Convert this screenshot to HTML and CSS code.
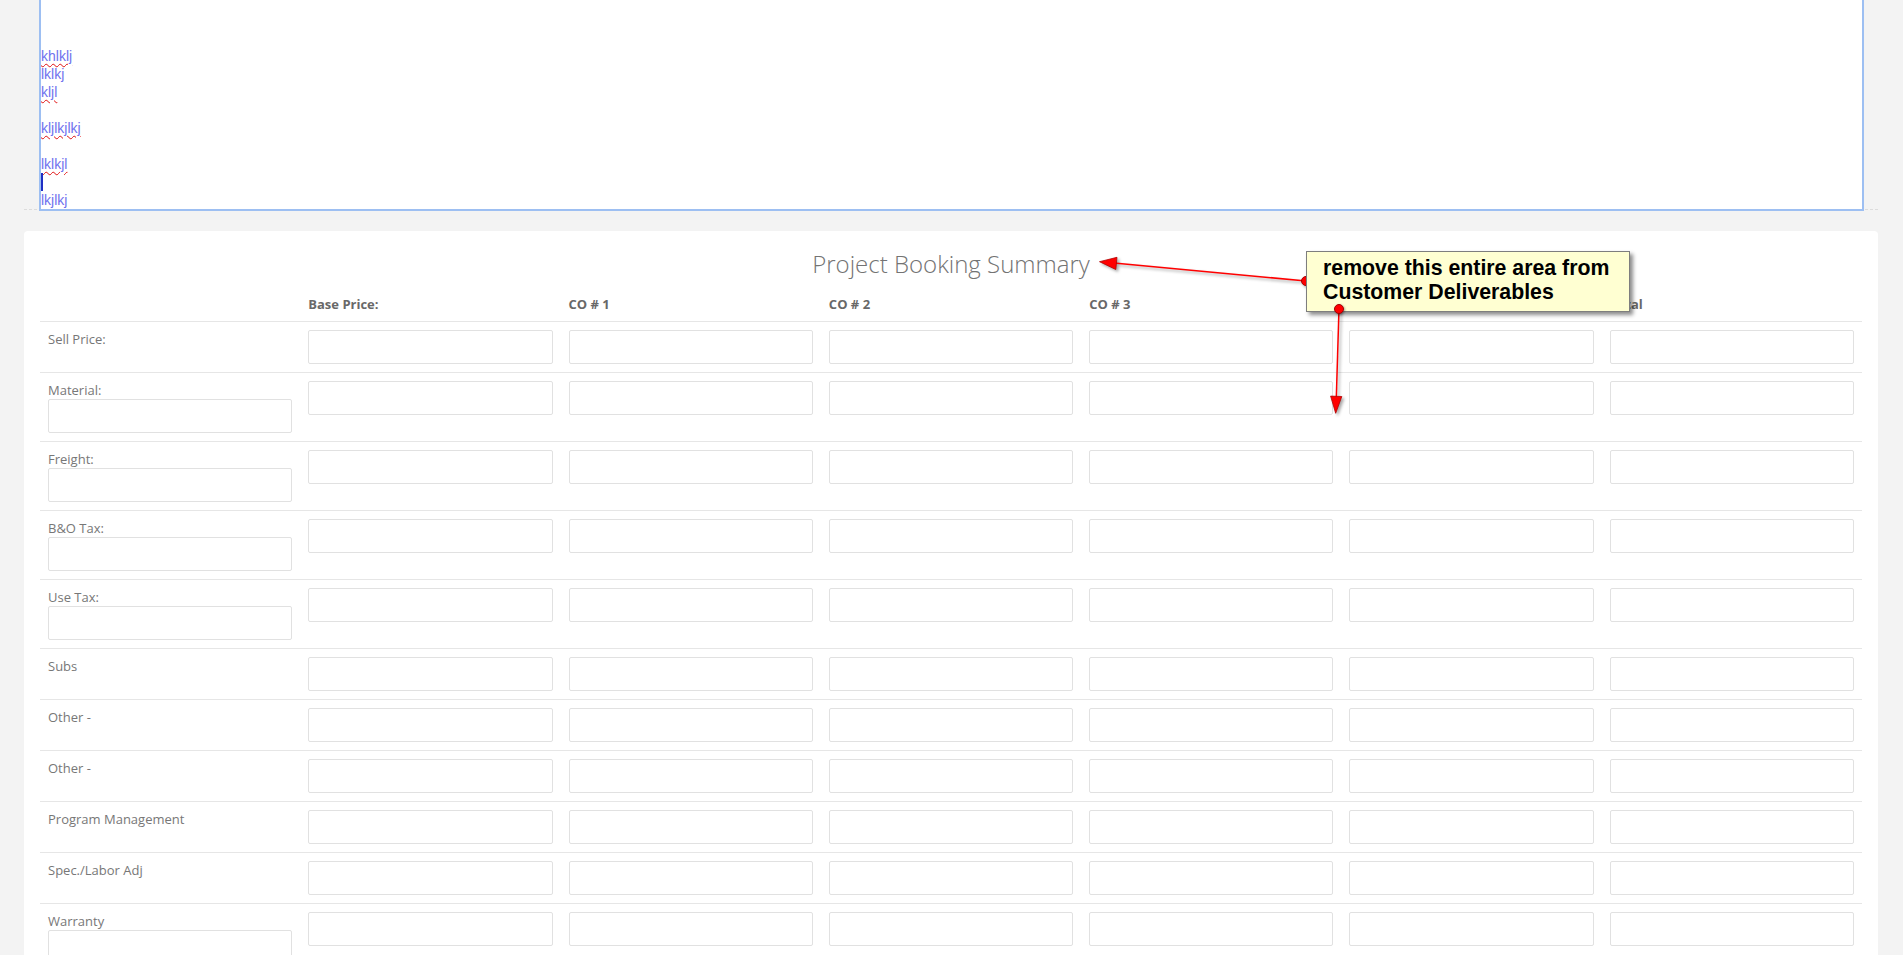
FILE: index.html
```html
<!DOCTYPE html>
<html lang="en">
<head>
<meta charset="utf-8">
<title>Project Booking Summary</title>
<link rel="stylesheet" href="styles.css">
</head>
<body>
<div class="editor-wrap">
  <div class="editor">
    <div class="line"><span class="sp">khlklj</span></div>
    <div class="line">lklkj</div>
    <div class="line"><span class="sp">kljl</span></div>
    <div class="line">&nbsp;</div>
    <div class="line"><span class="sp">kljlkjlkj</span></div>
    <div class="line">&nbsp;</div>
    <div class="line"><span class="sp">lklkjl</span></div>
    <div class="line"><span class="caret"></span></div>
    <div class="line">lkjlkj</div>
  </div>
</div>

<div class="card">
  <h3 class="card-title">Project Booking Summary</h3>
  <table class="summary">
    <thead>
      <tr>
        <th></th>
        <th>Base Price:</th>
        <th>CO # 1</th>
        <th>CO # 2</th>
        <th>CO # 3</th>
        <th>CO # 4</th>
        <th>Total</th>
      </tr>
    </thead>
    <tbody>
      <tr>
        <td><div class="label">Sell Price:</div></td>
        <td><div class="input"></div></td><td><div class="input"></div></td><td><div class="input"></div></td><td><div class="input"></div></td><td><div class="input"></div></td><td><div class="input"></div></td>
      </tr>
      <tr>
        <td><div class="label">Material:</div><div class="input"></div></td>
        <td><div class="input"></div></td><td><div class="input"></div></td><td><div class="input"></div></td><td><div class="input"></div></td><td><div class="input"></div></td><td><div class="input"></div></td>
      </tr>
      <tr>
        <td><div class="label">Freight:</div><div class="input"></div></td>
        <td><div class="input"></div></td><td><div class="input"></div></td><td><div class="input"></div></td><td><div class="input"></div></td><td><div class="input"></div></td><td><div class="input"></div></td>
      </tr>
      <tr>
        <td><div class="label">B&amp;O Tax:</div><div class="input"></div></td>
        <td><div class="input"></div></td><td><div class="input"></div></td><td><div class="input"></div></td><td><div class="input"></div></td><td><div class="input"></div></td><td><div class="input"></div></td>
      </tr>
      <tr>
        <td><div class="label">Use Tax:</div><div class="input"></div></td>
        <td><div class="input"></div></td><td><div class="input"></div></td><td><div class="input"></div></td><td><div class="input"></div></td><td><div class="input"></div></td><td><div class="input"></div></td>
      </tr>
      <tr>
        <td><div class="label">Subs</div></td>
        <td><div class="input"></div></td><td><div class="input"></div></td><td><div class="input"></div></td><td><div class="input"></div></td><td><div class="input"></div></td><td><div class="input"></div></td>
      </tr>
      <tr>
        <td><div class="label">Other -</div></td>
        <td><div class="input"></div></td><td><div class="input"></div></td><td><div class="input"></div></td><td><div class="input"></div></td><td><div class="input"></div></td><td><div class="input"></div></td>
      </tr>
      <tr>
        <td><div class="label">Other -</div></td>
        <td><div class="input"></div></td><td><div class="input"></div></td><td><div class="input"></div></td><td><div class="input"></div></td><td><div class="input"></div></td><td><div class="input"></div></td>
      </tr>
      <tr>
        <td><div class="label">Program Management</div></td>
        <td><div class="input"></div></td><td><div class="input"></div></td><td><div class="input"></div></td><td><div class="input"></div></td><td><div class="input"></div></td><td><div class="input"></div></td>
      </tr>
      <tr>
        <td><div class="label">Spec./Labor Adj</div></td>
        <td><div class="input"></div></td><td><div class="input"></div></td><td><div class="input"></div></td><td><div class="input"></div></td><td><div class="input"></div></td><td><div class="input"></div></td>
      </tr>
      <tr>
        <td><div class="label">Warranty</div><div class="input"></div></td>
        <td><div class="input"></div></td><td><div class="input"></div></td><td><div class="input"></div></td><td><div class="input"></div></td><td><div class="input"></div></td><td><div class="input"></div></td>
      </tr>
    </tbody>
  </table>
</div>

<svg class="arrows" width="1903" height="955" viewBox="0 0 1903 955" xmlns="http://www.w3.org/2000/svg">
  <line x1="1306" y1="281" x2="1114" y2="263" stroke="#ff0000" stroke-width="1.5"/>
  <polygon points="1099.5,261.7 1117,257.3 1115.8,269.5" fill="#ff0000" stroke="#b00000" stroke-width="0.8"/>
  <circle cx="1306" cy="281" r="4.5" fill="#ff0000" stroke="#a00000" stroke-width="1"/>
  <line x1="1339" y1="308.5" x2="1336.3" y2="398" stroke="#ff0000" stroke-width="1.5"/>
  <polygon points="1335.7,413.3 1330.6,396.1 1341.8,396.5" fill="#ff0000" stroke="#b00000" stroke-width="0.8"/>
</svg>

<div class="note">remove this entire area from<br>Customer Deliverables</div>
<svg class="dot" width="12" height="12" viewBox="0 0 12 12" xmlns="http://www.w3.org/2000/svg">
  <circle cx="6" cy="6" r="4.5" fill="#ff0000" stroke="#a00000" stroke-width="1"/>
</svg>
</body>
</html>
```

FILE: styles.css
```css
html, body {
  margin: 0;
  padding: 0;
}

body {
  background: #f3f3f3;
  font-family: "Open Sans", "Liberation Sans", sans-serif;
  font-size: 13px;
  color: #777;
  overflow: hidden;
  height: 955px;
  position: relative;
}

.editor-wrap {
  margin: 0 25px 0 24px;
  padding: 0 14px 0 15px;
  border-bottom: 1px dashed #dcdcdc;
}

.editor {
  background: #fff;
  border: 2px solid #9dbff2;
  border-top: 0;
  margin-bottom: -2px;
  padding-top: 47px;
  font-family: "Liberation Sans", Arial, sans-serif;
  font-size: 14px;
  line-height: 18px;
  color: #6f72ee;
}

.line {
  height: 18px;
  white-space: nowrap;
}

.sp {
  text-decoration: underline wavy #e01010;
  text-decoration-thickness: 1px;
  text-underline-offset: 2px;
}

.caret {
  display: inline-block;
  width: 2px;
  height: 18px;
  vertical-align: top;
  background: #1f2fc4;
}

.card {
  margin: 21px 25px 0 24px;
  padding: 0 16px 20px;
  background: #fff;
  border-radius: 4px;
}

.card::before {
  content: "";
  display: table;
}

.card-title {
  margin: 20px 0 10px;
  font-size: 24px;
  font-weight: 300;
  line-height: 26.4px;
  color: #737373;
  text-align: center;
}

.summary {
  width: 100%;
  border-collapse: collapse;
  table-layout: fixed;
}

.summary th {
  padding: 8px;
  text-align: left;
  font-size: 13px;
  font-weight: 700;
  line-height: 18px;
  color: #686868;
  border-bottom: 1px solid #e6e6e6;
}

.summary td {
  padding: 8px;
  vertical-align: top;
  border-top: 1px solid #e6e6e6;
}

.label {
  font-size: 13px;
  line-height: 18px;
  color: #777;
}

.input {
  box-sizing: border-box;
  height: 34px;
  width: 100%;
  background: #fff;
  border: 1px solid #e1e1e1;
  border-radius: 2px;
}

.arrows {
  position: absolute;
  left: 0;
  top: 0;
  pointer-events: none;
  filter: drop-shadow(2px 2px 1.5px rgba(0, 0, 0, 0.35));
}

.note {
  position: absolute;
  left: 1306px;
  top: 251px;
  box-sizing: border-box;
  width: 324px;
  height: 61px;
  padding: 4px 0 0 16px;
  background: #ffffd2;
  border: 1px solid #7e7e7e;
  box-shadow: 3px 3px 4px rgba(0, 0, 0, 0.45);
  font-family: "Liberation Sans", Arial, sans-serif;
  font-weight: 700;
  font-size: 21.3px;
  line-height: 24px;
  color: #000;
  white-space: nowrap;
}

.dot {
  position: absolute;
  left: 1333px;
  top: 302.5px;
  filter: drop-shadow(1px 1px 1px rgba(0, 0, 0, 0.35));
}
```
